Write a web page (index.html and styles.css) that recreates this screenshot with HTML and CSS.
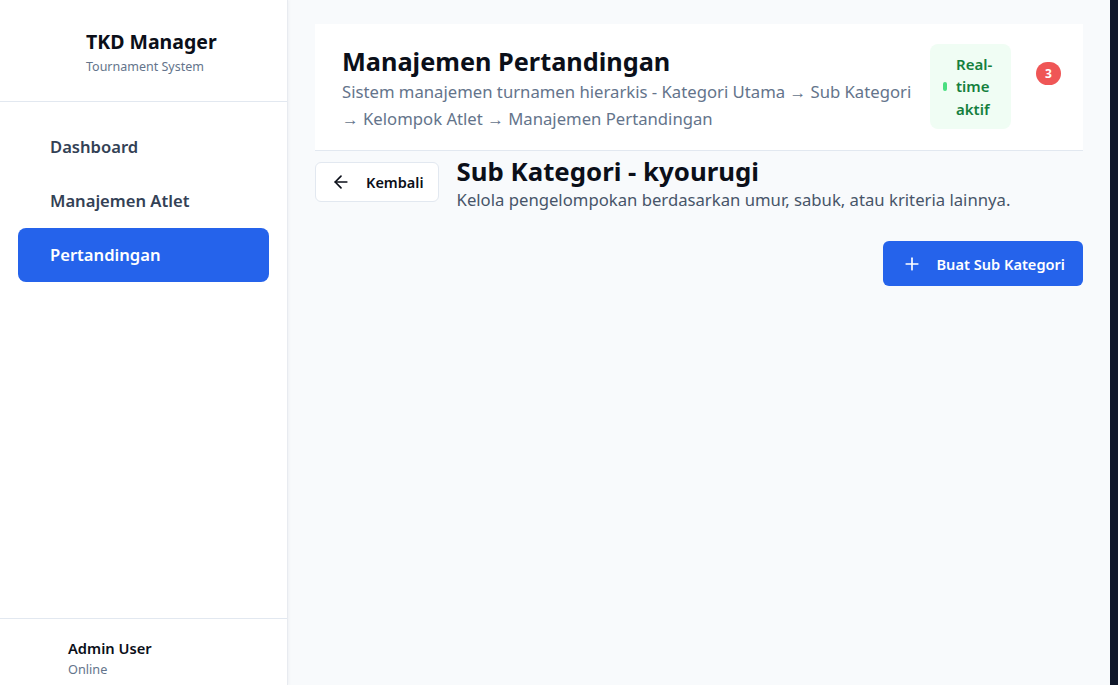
FILE: index.html
```html
<!DOCTYPE html>
<html lang="id">
<head>
<meta charset="utf-8">
<title>TKD Manager</title>
<link rel="stylesheet" href="styles.css">
</head>
<body>
<div class="app">
  <aside class="sidebar">
    <div class="brand">
      <div class="brand-title">TKD Manager</div>
      <div class="brand-sub">Tournament System</div>
    </div>
    <nav class="nav">
      <a class="nav-item">Dashboard</a>
      <a class="nav-item">Manajemen Atlet</a>
      <a class="nav-item active">Pertandingan</a>
    </nav>
    <div class="user">
      <div class="user-name">Admin User</div>
      <div class="user-status">Online</div>
    </div>
  </aside>
  <main class="main">
    <header class="page-header">
      <div class="page-head-text">
        <h1 class="page-title">Manajemen Pertandingan</h1>
        <p class="page-desc">Sistem manajemen turnamen hierarkis - Kategori Utama → Sub Kategori → Kelompok Atlet → Manajemen Pertandingan</p>
      </div>
      <div class="rt-badge">
        <span class="rt-dot"></span>
        <span class="rt-text">Real-time aktif</span>
      </div>
      <span class="notif">3</span>
    </header>
    <section class="sub-head">
      <button class="btn-back">
        <svg width="20" height="20" viewBox="0 0 24 24" fill="none" stroke="currentColor" stroke-width="2" stroke-linecap="round" stroke-linejoin="round"><path d="M19 12H5"/><path d="M12 19l-7-7 7-7"/></svg>
        <span>Kembali</span>
      </button>
      <div class="sub-text">
        <h2 class="sub-title">Sub Kategori - kyourugi</h2>
        <p class="sub-desc">Kelola pengelompokan berdasarkan umur, sabuk, atau kriteria lainnya.</p>
      </div>
    </section>
    <div class="actions">
      <button class="btn-primary">
        <svg width="20" height="20" viewBox="0 0 24 24" fill="none" stroke="currentColor" stroke-width="2" stroke-linecap="round"><path d="M12 5v14"/><path d="M5 12h14"/></svg>
        <span>Buat Sub Kategori</span>
      </button>
    </div>
  </main>
  <div class="edge"></div>
</div>
</body>
</html>
```
FILE: styles.css
```css
* { box-sizing: border-box; }
html, body { margin: 0; padding: 0; height: 100%; }
body {
  font-family: "Noto Sans", "Open Sans", sans-serif;
  color: #0f172a;
  background: #f8fafc;
}
.app { display: flex; height: 685px; }
.sidebar {
  width: 288px;
  flex: none;
  background: #fff;
  border-right: 1px solid #e8ebf0;
  box-shadow: 1px 0 3px rgba(15, 23, 42, 0.04);
  display: flex;
  flex-direction: column;
}
.brand {
  height: 102px;
  border-bottom: 1px solid #e2e8f0;
  padding: 29px 0 0 86px;
}
.brand-title { font-size: 19.5px; font-weight: 700; line-height: 26px; color: #0b0f19; }
.brand-sub { font-size: 12.5px; line-height: 18px; color: #64748b; margin-top: 3px; }
.nav { display: flex; flex-direction: column; padding: 18px 18px 0; flex: 1; }
.nav-item {
  height: 54px;
  display: flex;
  align-items: center;
  padding-left: 32px;
  padding-bottom: 1px;
  font-size: 16.6px;
  font-weight: 600;
  color: #334155;
  border-radius: 8px;
}
.nav-item.active { background: #2563eb; color: #fff; }
.user {
  border-top: 1px solid #e2e8f0;
  height: 67px;
  padding: 19px 0 0 68px;
}
.user-name { font-size: 14.7px; font-weight: 600; line-height: 21px; color: #0b0f19; }
.user-status { font-size: 12.7px; line-height: 19px; color: #64748b; margin-top: 1px; }

.main { flex: 1; padding: 24px 27px 0 27px; min-width: 0; }
.page-header {
  background: #fff;
  border-bottom: 1px solid #e2e8f0;
  display: flex;
  align-items: flex-start;
  padding: 20px 22px 18px 27px;
}
.page-head-text { flex: 1; min-width: 0; }
.page-title { margin: 0; font-size: 25.3px; line-height: 34px; font-weight: 700; color: #0b0f19; }
.page-desc { margin: 0; font-size: 16.7px; line-height: 27px; color: #64748b; }
.rt-badge {
  flex: none;
  margin-left: 15px;
  width: 81px;
  height: 85px;
  background: #f0fdf4;
  border-radius: 8px;
  display: flex;
  align-items: center;
  padding-left: 13px;
  gap: 9px;
}
.rt-dot { width: 4px; height: 9px; border-radius: 2px; background: #4ade80; flex: none; }
.rt-text { font-size: 15px; line-height: 22.5px; font-weight: 600; color: #15803d; width: 42px; }
.notif {
  flex: none;
  margin-left: 25px;
  margin-top: 18px;
  width: 25px;
  height: 23px;
  border-radius: 12px;
  background: #ef5656;
  color: #fff;
  font-size: 12px;
  font-weight: 700;
  display: flex;
  align-items: center;
  justify-content: center;
}
.sub-head { display: flex; align-items: flex-start; gap: 18px; padding-top: 4px; }
.btn-back {
  display: flex;
  align-items: center;
  gap: 15px;
  height: 40px;
  padding: 0 14px 0 15px;
  background: #fff;
  border: 1px solid #e2e8f0;
  border-radius: 6px;
  font-family: inherit;
  font-size: 14.5px;
  font-weight: 600;
  color: #0b0f19;
  margin-top: 7px;
}
.sub-title { margin: 0; font-size: 25.8px; line-height: 32px; font-weight: 700; color: #0b0f19; }
.sub-desc { margin: 0; font-size: 16.7px; line-height: 26px; color: #475569; }
.actions { display: flex; justify-content: flex-end; padding-top: 28px; }
.btn-primary {
  display: flex;
  align-items: center;
  gap: 15px;
  height: 45px;
  padding: 0 18px 0 19px;
  background: #2563eb;
  color: #fff;
  border: none;
  border-radius: 6px;
  font-family: inherit;
  font-size: 14.6px;
  font-weight: 600;
}
.edge { width: 8px; flex: none; background: #0f172a; }
```
